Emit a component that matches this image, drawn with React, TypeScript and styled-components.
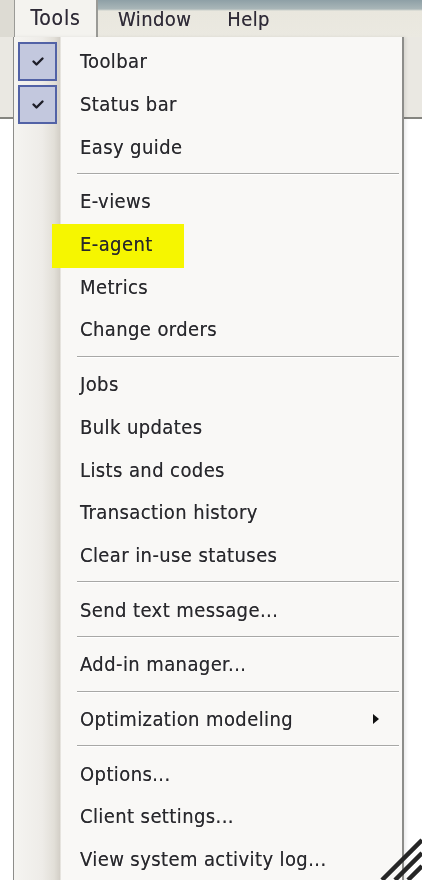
import React from "react";
import styled, { createGlobalStyle } from "styled-components";

const GlobalStyle = createGlobalStyle`
  html, body {
    margin: 0;
    padding: 0;
    background: #ffffff;
  }
  body {
    font-family: "DejaVu Sans Condensed", "DejaVu Sans", "Liberation Sans", sans-serif;
  }
`;

const Page = styled.div`
  position: relative;
  width: 422px;
  height: 880px;
  overflow: hidden;
  background: #ffffff;
  filter: blur(0.45px);
`;

const MenuBar = styled.div`
  display: flex;
  height: 37px;
  background: #e2e0d8;
`;

const LeftPad = styled.div`
  width: 14px;
  background: #dddbd3;
`;

const MenuTab = styled.div<{ $active?: boolean }>`
  display: flex;
  align-items: center;
  padding: 0 16px;
  font-size: 20px;
  letter-spacing: 0.4px;
  color: #2e2a36;
  text-shadow: 0 0 0.6px rgba(40, 30, 50, 0.6);
  ${(p) =>
    p.$active &&
    `
    width: 84px;
    box-sizing: border-box;
    background: #f4f3ef;
    border-left: 1px solid #9a9a96;
    border-right: 2px solid #9a9a96;
    justify-content: center;
    padding: 0 0 2px 0;
    font-size: 21px;
    letter-spacing: 0.8px;
  `}
`;

const MenuRest = styled.div`
  flex: 1;
  display: flex;
  align-items: center;
  padding-left: 4px;
  gap: 4px;
  background: linear-gradient(
    to bottom,
    #8ea0a6 0,
    #a9b6b8 9px,
    #e9e7de 11px,
    #ebe9e1 100%
  );
`;

const ToolbarBand = styled.div`
  height: 80px;
  background: #eae8e2;
  border-bottom: 2px solid #858580;
`;

const Dropdown = styled.div`
  position: absolute;
  left: 13px;
  top: 37px;
  width: 391px;
  height: 860px;
  box-sizing: border-box;
  padding-top: 3px;
  border-left: 1px solid #8d8d8a;
  border-right: 2px solid #8d8d8a;
  background: linear-gradient(
    to right,
    #f5f4f1 0,
    #eeece8 28px,
    #e2dfd8 40px,
    #d3cfc7 46px,
    #f9f8f6 47px,
    #f9f8f6 100%
  );
  box-shadow: 2px 0 3px rgba(0, 0, 0, 0.08);
`;

const Item = styled.div`
  display: flex;
  align-items: center;
  height: 42.7px;
  font-size: 20px;
  color: #28282c;
  letter-spacing: 0.4px;
  text-shadow: 0 0 0.6px rgba(30, 30, 40, 0.6);
`;

const CheckCell = styled.div`
  width: 47px;
  display: flex;
  align-items: center;
  padding-left: 4px;
  box-sizing: border-box;
  align-self: stretch;
`;

const CheckBox = styled.div`
  width: 39px;
  height: 39px;
  box-sizing: border-box;
  border: 2px solid #5262a6;
  background: #c3c8de;
  display: flex;
  align-items: center;
  justify-content: center;
`;

const Label = styled.span<{ $highlight?: boolean }>`
  position: relative;
  padding-left: 19px;
  z-index: 0;
  ${(p) =>
    p.$highlight &&
    `
    &::before {
      content: "";
      position: absolute;
      left: -9px;
      top: calc(50% - 20px);
      width: 132px;
      height: 44px;
      background: #f6f600;
      z-index: -1;
    }
  `}
`;

const Arrow = styled.span`
  margin-left: auto;
  margin-right: 23px;
  width: 0;
  height: 0;
  border-top: 5px solid transparent;
  border-bottom: 5px solid transparent;
  border-left: 6px solid #111;
`;

const Separator = styled.div`
  height: 12px;
  display: flex;
  align-items: center;
  padding-left: 63px;
  padding-right: 3px;
  &::after {
    content: "";
    flex: 1;
    height: 1px;
    background: #a8a8a6;
    border-bottom: 1px solid #ffffff;
  }
`;

const Grip = styled.svg`
  position: absolute;
  right: 0;
  bottom: 0;
`;

const Check = () => (
  <svg width="14" height="11" viewBox="0 0 14 11">
    <path
      d="M2.5 5.5 L5.5 8.5 L11.5 2.5"
      fill="none"
      stroke="#1e1e28"
      strokeWidth="2.4"
      strokeLinecap="round"
      strokeLinejoin="round"
    />
  </svg>
);

type Entry =
  | { kind: "item"; text: string; checked?: boolean; highlight?: boolean; sub?: boolean }
  | { kind: "sep" };

const entries: Entry[] = [
  { kind: "item", text: "Toolbar", checked: true },
  { kind: "item", text: "Status bar", checked: true },
  { kind: "item", text: "Easy guide" },
  { kind: "sep" },
  { kind: "item", text: "E-views" },
  { kind: "item", text: "E-agent", highlight: true },
  { kind: "item", text: "Metrics" },
  { kind: "item", text: "Change orders" },
  { kind: "sep" },
  { kind: "item", text: "Jobs" },
  { kind: "item", text: "Bulk updates" },
  { kind: "item", text: "Lists and codes" },
  { kind: "item", text: "Transaction history" },
  { kind: "item", text: "Clear in-use statuses" },
  { kind: "sep" },
  { kind: "item", text: "Send text message..." },
  { kind: "sep" },
  { kind: "item", text: "Add-in manager..." },
  { kind: "sep" },
  { kind: "item", text: "Optimization modeling", sub: true },
  { kind: "sep" },
  { kind: "item", text: "Options..." },
  { kind: "item", text: "Client settings..." },
  { kind: "item", text: "View system activity log..." },
];

export default function App() {
  return (
    <Page>
      <GlobalStyle />
      <MenuBar>
        <LeftPad />
        <MenuTab $active>Tools</MenuTab>
        <MenuRest>
          <MenuTab>Window</MenuTab>
          <MenuTab>Help</MenuTab>
        </MenuRest>
      </MenuBar>
      <ToolbarBand />

      <Dropdown>
        {entries.map((e, i) =>
          e.kind === "sep" ? (
            <Separator key={i} />
          ) : (
            <Item key={i}>
              <CheckCell>
                {e.checked && (
                  <CheckBox>
                    <Check />
                  </CheckBox>
                )}
              </CheckCell>
              <Label $highlight={e.highlight}>{e.text}</Label>
              {e.sub && <Arrow />}
            </Item>
          )
        )}
      </Dropdown>

      <Grip width="48" height="44" viewBox="0 0 48 44">
        <path
          d="M48 4 L8 44 M48 17 L21 44 M48 30 L34 44"
          stroke="#262626"
          strokeWidth="4.5"
          fill="none"
        />
      </Grip>
    </Page>
  );
}
